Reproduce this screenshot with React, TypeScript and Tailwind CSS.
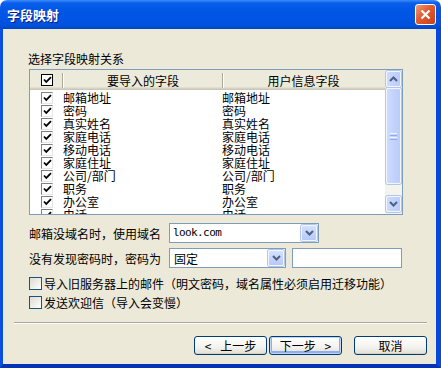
import React from "react";

const rows = [
  ["邮箱地址", "邮箱地址"],
  ["密码", "密码"],
  ["真实姓名", "真实姓名"],
  ["家庭电话", "家庭电话"],
  ["移动电话", "移动电话"],
  ["家庭住址", "家庭住址"],
  ["公司/部门", "公司/部门"],
  ["职务", "职务"],
  ["办公室", "办公室"],
  ["电话", "电话"],
];

function Check({ color = "#000" }: { color?: string }) {
  return (
    <svg width="9" height="9" viewBox="0 0 9 9">
      <path d="M1 3.5 L3.3 6 L8 1.2" stroke={color} strokeWidth="1.8" fill="none" />
    </svg>
  );
}

function Chevron({ up = false }: { up?: boolean }) {
  return (
    <svg width="9" height="6" viewBox="0 0 9 6">
      <path
        d={up ? "M1 5 L4.5 1.5 L8 5" : "M1 1 L4.5 4.5 L8 1"}
        stroke="#4D6185"
        strokeWidth="2"
        fill="none"
      />
    </svg>
  );
}

function ScrollBtn({ up = false }: { up?: boolean }) {
  return (
    <div className="h-[16px] mx-[1px] rounded-[2px] border border-[#F2F6FF] bg-[linear-gradient(to_right,#CDDCFE,#B9CCF8)] shadow-[0_0_0_1px_#B2C5F0] flex items-center justify-center">
      <Chevron up={up} />
    </div>
  );
}

function ComboBtn() {
  return (
    <div className="w-[16px] h-full rounded-[2px] border border-[#F2F6FF] bg-[linear-gradient(to_bottom,#D4E1FE,#B6C9F7)] shadow-[0_0_0_1px_#B2C5F0] flex items-center justify-center">
      <Chevron />
    </div>
  );
}

function XpCheck() {
  return (
    <div className="w-[13px] h-[13px] shrink-0 border border-[#1C5180] bg-[linear-gradient(135deg,#DCDBD5,#F4F4F0_70%,#FFFFFF)]" />
  );
}

function XpButton({ children, def = false }: { children: React.ReactNode; def?: boolean }) {
  return (
    <div
      className={
        "w-[73px] h-[19px] rounded-[3px] border border-[#003C74] bg-[linear-gradient(to_bottom,#FFFFFF,#F3F2EE_60%,#E2DED3)] flex items-center justify-center leading-[13px] [word-spacing:6px] whitespace-nowrap " +
        (def ? "shadow-[inset_0_0_0_1px_#C2D5F8,inset_0_-1px_0_2px_#8EADF0]" : "shadow-[inset_0_-1px_0_#D6D0C5]")
      }
    >
      {children}
    </div>
  );
}

export default function App() {
  return (
    <div className="w-[441px] h-[368px] bg-white font-['Noto_Sans_CJK_SC',sans-serif] text-[12px] text-black">
      <div className="h-[29px] rounded-t-[7px] bg-[linear-gradient(to_bottom,#3D8CF7_0px,#0A5EEB_3px,#0056E6_10px,#0054E3_20px,#0050DA_26px,#0044C6_29px)] flex items-center justify-between pl-[7px] pr-[5px]">
        <span className="text-white font-bold text-[13px] leading-[14px] [text-shadow:1px_1px_#0B1A8C]">字段映射</span>
        <div className="w-[21px] h-[21px] rounded-[3px] border border-white bg-[linear-gradient(to_bottom_right,#F09A7C,#E15A30_45%,#C9411A)] flex items-center justify-center">
          <svg width="11" height="11" viewBox="0 0 11 11">
            <path d="M1.5 1.5 L9.5 9.5 M9.5 1.5 L1.5 9.5" stroke="white" strokeWidth="2.2" />
          </svg>
        </div>
      </div>
      <div className="flex h-[339px] border-l-[3px] border-l-[#0B4FDF] border-r-[5px] border-r-[#0747DA] border-b-[4px] border-b-[#0533B5]">
        <div className="w-[433px] h-[335px] bg-[#ECE9D8] flex flex-col">
          <div className="pl-[25px] pt-[23px] h-[36px] leading-[13px]">选择字段映射关系</div>
          <div className="ml-[26px] mt-[4px] w-[374px] h-[146px] border border-[#7F9DB9] bg-white flex">
            <div className="w-[355px] flex flex-col">
              <div className="h-[20px] flex items-center bg-[#EBEADB] shadow-[inset_0_-1px_#CBC7B8,inset_0_-2px_#D6D2C2,inset_0_-3px_#E2DECD]">
                <div className="w-[32px] h-full flex items-center pl-[11px]">
                  <div className="w-[12px] h-[12px] border border-black bg-white flex items-center justify-center">
                    <Check />
                  </div>
                </div>
                <div className="w-[2px] h-[15px] border-l border-l-[#ACA899] border-r border-r-white" />
                <div className="w-[158px] text-center leading-[13px]">要导入的字段</div>
                <div className="w-[2px] h-[15px] border-l border-l-[#ACA899] border-r border-r-white" />
                <div className="w-[159px] text-center leading-[13px]">用户信息字段</div>
              </div>
              <div className="flex-1 overflow-hidden pt-[1px]">
                {rows.map(([a, b]) => (
                  <div key={a} className="h-[13px] flex items-start leading-[13px]">
                    <div className="w-[33px] pl-[11px] pt-[1px]">
                      <div className="w-[12px] h-[12px] border-l border-t border-l-[#808080] border-t-[#808080] border-r border-b border-r-[#E6E6E6] border-b-[#E6E6E6] bg-white flex items-center justify-center">
                        <Check />
                      </div>
                    </div>
                    <div className="w-[159px] whitespace-nowrap">{a}</div>
                    <div className="whitespace-nowrap">{b}</div>
                  </div>
                ))}
              </div>
            </div>
            <div className="w-[17px] bg-[#F4F3EE] flex flex-col pt-[1px] pb-[2px]">
              <ScrollBtn up />
              <div className="mt-[1px] h-[96px] mx-[1px] rounded-[2px] border border-[#F2F6FF] bg-[linear-gradient(to_right,#CDDCFE,#B9CCF8)] shadow-[0_0_0_1px_#B2C5F0] flex flex-col items-center justify-center gap-[1px]">
                <div className="w-[7px] h-[1px] bg-[#EEF4FE]" />
                <div className="w-[7px] h-[1px] bg-[#8CAEF0]" />
                <div className="w-[7px] h-[1px] bg-[#EEF4FE]" />
                <div className="w-[7px] h-[1px] bg-[#8CAEF0]" />
              </div>
              <div className="flex-1" />
              <ScrollBtn />
            </div>
          </div>
          <div className="ml-[26px] mt-[8px] flex items-center h-[20px]">
            <div className="w-[140px] leading-[13px] whitespace-nowrap">邮箱没域名时，使用域名</div>
            <div className="w-[150px] h-[20px] border border-[#7F9DB9] bg-white flex p-[1px]">
              <div className="flex-1 pl-[2px] flex items-center font-['DejaVu_Sans_Mono',monospace] text-[11px] tracking-[-0.6px]">look.com</div>
              <ComboBtn />
            </div>
          </div>
          <div className="ml-[26px] mt-[5px] flex items-center h-[20px]">
            <div className="w-[140px] leading-[13px] whitespace-nowrap">没有发现密码时，密码为</div>
            <div className="w-[117px] h-[20px] border border-[#7F9DB9] bg-white flex p-[1px]">
              <div className="flex-1 pl-[3px] flex items-center leading-[13px]">固定</div>
              <ComboBtn />
            </div>
            <div className="ml-[6px] w-[110px] h-[20px] border border-[#7F9DB9] bg-white" />
          </div>
          <div className="ml-[26px] mt-[9px] h-[13px] flex items-center">
            <XpCheck />
            <span className="ml-[2px] leading-[13px] whitespace-nowrap">导入旧服务器上的邮件（明文密码，域名属性必须启用迁移功能）</span>
          </div>
          <div className="ml-[26px] mt-[6px] h-[13px] flex items-center">
            <XpCheck />
            <span className="ml-[2px] leading-[13px] whitespace-nowrap">发送欢迎信（导入会变慢）</span>
          </div>
          <div className="ml-[11px] mt-[13px] w-[413px] h-[2px] border-t border-t-[#ACA899] border-b border-b-white" />
          <div className="mt-[12px] pl-[191px] flex">
            <XpButton>&lt; 上一步</XpButton>
            <div className="ml-[2px]">
              <XpButton def>下一步 &gt;</XpButton>
            </div>
            <div className="ml-[12px]">
              <XpButton>取消</XpButton>
            </div>
          </div>
        </div>
      </div>
    </div>
  );
}
